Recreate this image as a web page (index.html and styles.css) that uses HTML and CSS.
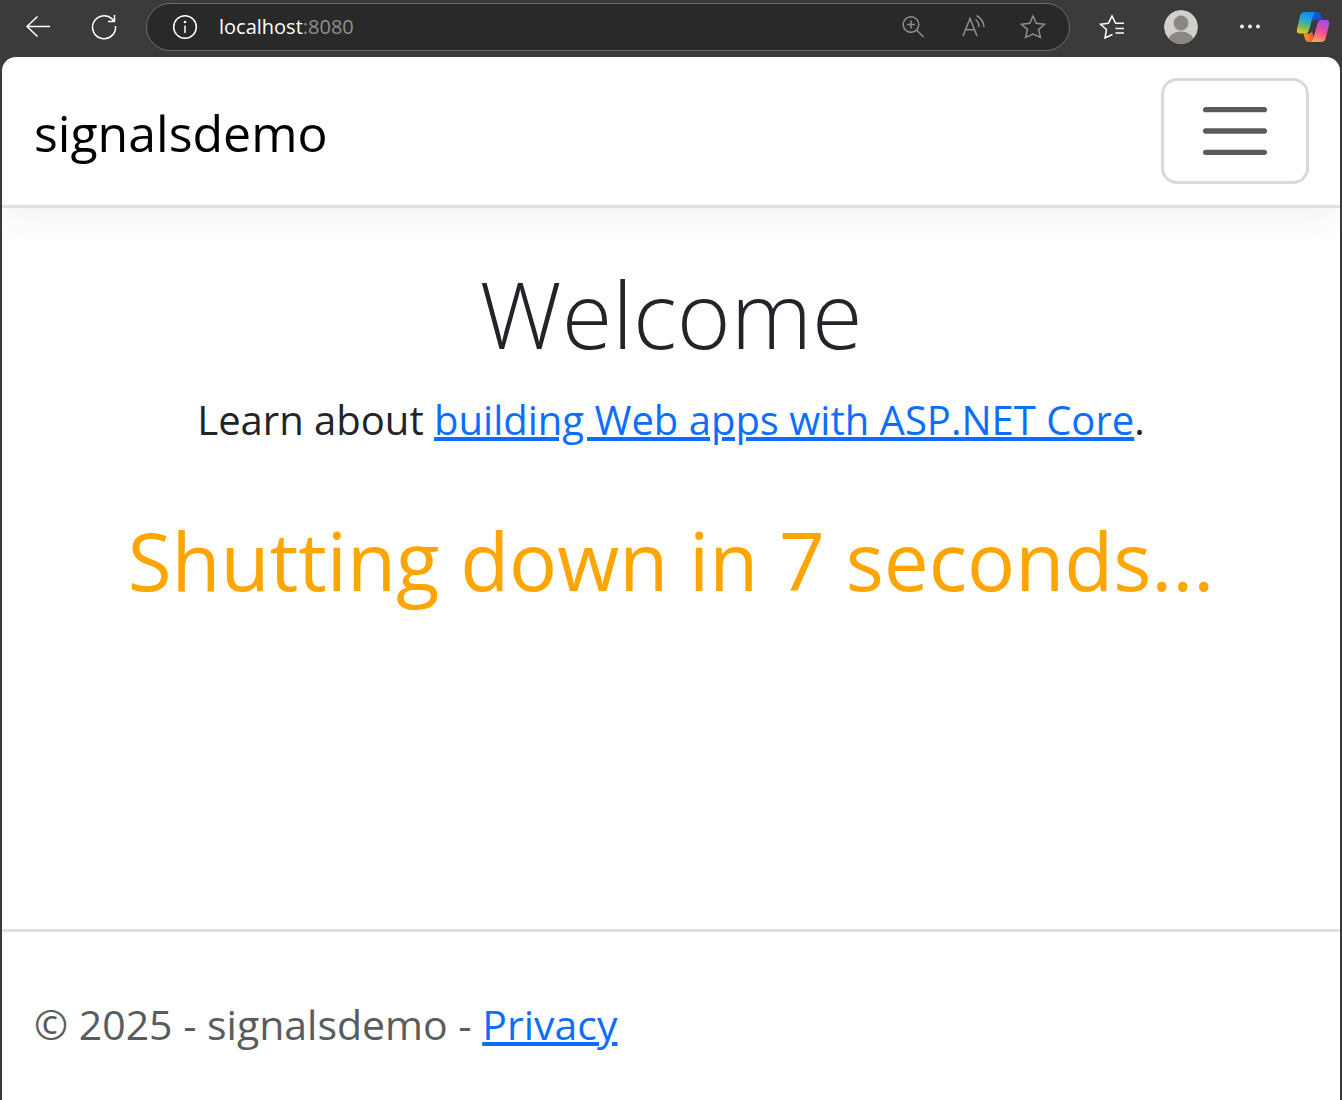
FILE: index.html
```html
<!DOCTYPE html>
<html lang="en">
<head>
<meta charset="utf-8">
<meta name="viewport" content="width=device-width, initial-scale=1">
<title>Home page - signalsdemo</title>
<link rel="stylesheet" href="styles.css">
</head>
<body>
<div class="toolbar">
  <button class="tool" type="button" aria-label="Back">
    <svg width="28" height="28" viewBox="0 0 28 28"><path d="M26 13.500H3M13.500 3.500 3 13.500 13.500 23.500"/></svg>
  </button>
  <button class="tool" type="button" aria-label="Refresh">
    <svg width="28" height="28" viewBox="0 0 28 28"><path d="M25.500 13A11.500 11.500 0 1 1 22 5.900L24.500 8.500M24.500 2V8.500H18"/></svg>
  </button>
  <div class="address">
    <button class="info" type="button" aria-label="View site information">
      <svg width="28" height="28" viewBox="0 0 28 28"><circle cx="14" cy="14" r="11.300"/><path d="M14 12.500V20"/><circle class="solid" cx="14" cy="9" r="1.300"/></svg>
    </button>
    <div class="url" role="textbox" tabindex="0" aria-label="Address"><span class="host">localhost</span>:8080</div>
    <div class="address-tools">
      <button class="tool dim" type="button" aria-label="Zoom">
        <svg width="28" height="28" viewBox="0 0 28 28"><circle cx="12" cy="11.500" r="7.800"/><path d="M17.800 17.300 24.500 24M12 7.500v8M8 11.500h8"/></svg>
      </button>
      <button class="tool dim" type="button" aria-label="Read aloud">
        <svg width="28" height="28" viewBox="0 0 28 28"><path d="M4 23 11 5.500 18 23M6.500 16.800h9M16.500 6.500Q19.800 9 20 14M17.500 2.500Q24.500 6.500 25 14"/></svg>
      </button>
      <button class="tool dim" type="button" aria-label="Add to favorites">
        <svg width="28" height="28" viewBox="0 0 28 28"><path d="M14 3 17.200 10.200 25.500 11.200 19.500 16.500 21.500 24.500 14 21 6.500 24.500 8.500 16.500 2.500 11.200 10.800 10.200Z"/></svg>
      </button>
    </div>
  </div>
  <div class="browser-tools">
    <button class="tool" type="button" aria-label="Favorites">
      <svg width="28" height="28" viewBox="0 0 28 28"><path d="M14.500 21.500 7 25 8.500 16.500 2.500 11.200 10.500 10.200 14 3 17.500 10.200H26M17.500 15.500H26M17.500 20H26"/></svg>
    </button>
    <button class="tool" type="button" aria-label="Profile">
      <svg width="34" height="34" viewBox="0 0 34 34"><defs><clipPath id="avatar"><circle cx="17" cy="17" r="17"/></clipPath></defs><g clip-path="url(#avatar)" stroke="none"><circle cx="17" cy="17" r="17" fill="#d1cfcb"/><circle cx="17" cy="13" r="7.400" fill="#8b8784"/><ellipse cx="17" cy="32" rx="13" ry="10.500" fill="#8b8784"/></g></svg>
    </button>
    <div class="menu-tools">
      <button class="tool" type="button" aria-label="Settings and more">
        <svg width="28" height="28" viewBox="0 0 28 28"><g class="solid"><circle cx="6" cy="13.500" r="1.900"/><circle cx="14" cy="13.500" r="1.900"/><circle cx="22" cy="13.500" r="1.900"/></g></svg>
      </button>
      <button class="tool" type="button" aria-label="Copilot">
        <svg width="34" height="32" viewBox="0 0 34 32"><defs>
          <linearGradient id="c1" x1=".6" y1="0" x2=".35" y2="1"><stop offset="0" stop-color="#1588e8"/><stop offset=".4" stop-color="#26a6d8"/><stop offset=".7" stop-color="#6cba63"/><stop offset="1" stop-color="#f2c80a"/></linearGradient>
          <linearGradient id="c2" x1=".7" y1="0" x2=".3" y2="1"><stop offset="0" stop-color="#a24cf0"/><stop offset=".5" stop-color="#ee5295"/><stop offset="1" stop-color="#ffa45c"/></linearGradient>
          <linearGradient id="c3"><stop offset="0" stop-color="#0d5fd8"/><stop offset="1" stop-color="#1b4ad0"/></linearGradient>
          <linearGradient id="c4"><stop offset="0" stop-color="#f5a12b"/><stop offset="1" stop-color="#f0483c"/></linearGradient></defs>
          <g stroke="none"><path fill="url(#c3)" d="M15 1h6q3 0 4 3l1.500 5H20q-2 0-3 2Z"/><path fill="url(#c4)" d="M19 31h-6q-3 0-4-3l-1.500-5.500H13q2 0 3-2Z"/><path fill="url(#c1)" d="M9 1h12q-3 0-4 4l-4 14q-1 3.500-4 3.500H4q-4 0-3-4.500L4 5q1-4 5-4Z"/><path fill="url(#c2)" d="M25 31H14q2.500-1 3.500-4l4-14.500q1-3.500 4-3.500H30q4 0 3 4.500l-3 13q-1 4.500-5 4.500Z"/></g></svg>
      </button>
    </div>
  </div>
</div>
<div class="page">
  <header class="navbar">
    <a class="brand" href="#">signalsdemo</a>
    <button class="toggler" type="button" aria-label="Toggle navigation">
      <svg width="80" height="80" viewBox="0 0 30 30"><path d="M4 7h22M4 15h22M4 23h22"/></svg>
    </button>
  </header>
  <main class="content">
    <h1 class="title">Welcome</h1>
    <p class="lead">Learn about <a href="#">building Web apps with ASP.NET Core</a>.</p>
    <p class="countdown">Shutting down in 7 seconds...</p>
  </main>
  <footer class="footer">© 2025 - signalsdemo - <a href="#">Privacy</a></footer>
</div>
</body>
</html>
```
FILE: styles.css
```css
* { box-sizing: border-box; }

body {
  margin: 0;
  min-height: 100vh;
  display: flex;
  flex-direction: column;
  background: #3b3b3b;
  color: #212529;
  font-family: "Segoe UI", "Open Sans", "Noto Sans", sans-serif;
}

a { color: #0d6efd; text-decoration-thickness: 4px; }
button { font: inherit; cursor: pointer; }

/* Browser toolbar */
.toolbar {
  display: flex;
  align-items: center;
  gap: 38px;
  height: 57px;
  padding: 0 12px 3px 24px;
}

.tool,
.info {
  display: flex;
  padding: 0;
  border: 0;
  background: none;
  color: #fff;
}

.toolbar svg {
  fill: none;
  stroke: currentColor;
  stroke-width: 1.5;
}

.toolbar svg .solid { fill: currentColor; stroke: none; }
.tool.dim { color: #8f8f8f; }

.address {
  flex: 1;
  display: flex;
  align-items: center;
  height: 48px;
  margin: 0 -10px;
  padding: 0 22px 0 24px;
  border: 1px solid #6c6c6c;
  border-radius: 24px;
  background: #292929;
}

.url {
  flex: 1;
  margin-left: 20px;
  color: #8f8f8f;
  font-size: 20px;
  line-height: 28px;
}

.host { color: #fff; }

.address-tools {
  display: flex;
  gap: 32px;
}

.browser-tools {
  display: flex;
  align-items: center;
  gap: 38px;
}

.menu-tools {
  display: flex;
  align-items: center;
  gap: 32px;
}

/* Web page */
.page {
  flex: 1;
  display: flex;
  flex-direction: column;
  margin: 0 2px;
  border-radius: 14px 14px 0 0;
  background: #fff;
  overflow: hidden;
}

.navbar {
  display: flex;
  align-items: center;
  justify-content: space-between;
  padding: 21px 31px 21px 32px;
  border-bottom: 3px solid #dee2e6;
  box-shadow: 0 11px 32px rgba(0, 0, 0, 0.05);
}

.brand {
  padding-top: 4px;
  color: #000;
  font-size: 50px;
  line-height: 78px;
  text-decoration: none;
}

.toggler {
  display: flex;
  align-items: center;
  justify-content: center;
  width: 148px;
  height: 106px;
  padding: 0;
  border: 3px solid #d9d9d9;
  border-radius: 16px;
  background: none;
}

.toggler svg {
  fill: none;
  stroke: #595c5f;
  stroke-width: 2;
  stroke-linecap: round;
}

.content {
  flex: 1;
  padding: 48px 32px;
  text-align: center;
}

.title {
  margin: 0 0 16px;
  font-size: 92px;
  font-weight: 300;
  line-height: 116px;
}

.lead {
  margin: 0 0 48px;
  font-size: 40px;
  line-height: 64px;
}

.countdown {
  margin: 0;
  color: orange;
  font-size: 80px;
  line-height: 120px;
}

.footer {
  padding: 50px 32px 34px;
  border-top: 3px solid #dee2e6;
  color: #595c5f;
  font-size: 41px;
  line-height: 84px;
}
```
